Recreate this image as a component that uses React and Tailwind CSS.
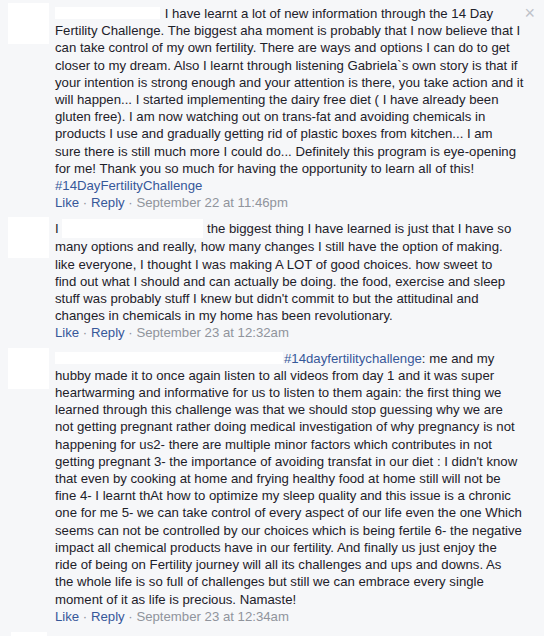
import React from 'react'

const comments = [
  {
    id: 1,
    lead: <span className="inline-block w-[105px] h-[12px] bg-white align-[-1px] mr-[1px]"></span>,
    lines: [
      ' I have learnt a lot of new information through the 14 Day',
      'Fertility Challenge. The biggest aha moment is probably that I now believe that I',
      'can take control of my own fertility. There are ways and options I can do to get',
      'closer to my dream. Also I learnt through listening Gabriela`s own story is that if',
      'your intention is strong enough and your attention is there, you take action and it',
      'will happen... I started implementing the dairy free diet ( I have already been',
      'gluten free). I am now watching out on trans-fat and avoiding chemicals in',
      'products I use and gradually getting rid of plastic boxes from kitchen... I am',
      'sure there is still much more I could do... Definitely this program is eye-opening',
      'for me! Thank you so much for having the opportunity to learn all of this!',
    ],
    tag: '#14DayFertilityChallenge',
    date: 'September 22 at 11:46pm',
  },
  {
    id: 2,
    lead: (
      <>
        I <span className="inline-block w-[141px] h-[19px] bg-white align-[-5px]"></span>
      </>
    ),
    lines: [
      ' the biggest thing I have learned is just that I have so',
      'many options and really, how many changes I still have the option of making.',
      'like everyone, I thought I was making A LOT of good choices. how sweet to',
      'find out what I should and can actually be doing. the food, exercise and sleep',
      "stuff was probably stuff I knew but didn't commit to but the attitudinal and",
      'changes in chemicals in my home has been revolutionary.',
    ],
    date: 'September 23 at 12:32am',
  },
  {
    id: 3,
    lead: (
      <>
        <span className="inline-block w-[228px] h-[12px] bg-white align-[-1px] mr-[1px]"></span>
        <span className="text-[#365899]">#14dayfertilitychallenge</span>
      </>
    ),
    lines: [
      ': me and my',
      'hubby made it to once again listen to all videos from day 1 and it was super',
      'heartwarming and informative for us to listen to them again: the first thing we',
      'learned through this challenge was that we should stop guessing why we are',
      'not getting pregnant rather doing medical investigation of why pregnancy is not',
      'happening for us2- there are multiple minor factors which contributes in not',
      "getting pregnant 3- the importance of avoiding transfat in our diet : I didn't know",
      'that even by cooking at home and frying healthy food at home still will not be',
      'fine 4- I learnt thAt how to optimize my sleep quality and this issue is a chronic',
      'one for me 5- we can take control of every aspect of our life even the one Which',
      'seems can not be controlled by our choices which is being fertile 6- the negative',
      'impact all chemical products have in our fertility. And finally us just enjoy the',
      'ride of being on Fertility journey will all its challenges and ups and downs. As',
      'the whole life is so full of challenges but still we can embrace every single',
      'moment of it as life is precious. Namaste!',
    ],
    date: 'September 23 at 12:34am',
  },
]

function Comment({ comment }) {
  return (
    <div className="flex items-start">
      <div className="w-[41px] h-[41px] bg-white shrink-0 ml-2 mt-[-2px]"></div>
      <div className="ml-[6px] w-[475px]">
        <p className="text-[#1d2129] whitespace-pre">
          {comment.lead}
          {comment.lines.map((line, i) => (
            <React.Fragment key={i}>
              {i > 0 && <br />}
              {line}
            </React.Fragment>
          ))}
          {comment.tag && (
            <>
              <br />
              <span className="text-[#365899]">{comment.tag}</span>
            </>
          )}
        </p>
        <div>
          <span className="text-[#365899]">Like</span>
          <span className="text-[#90949c]"> · </span>
          <span className="text-[#365899]">Reply</span>
          <span className="text-[#90949c]"> · {comment.date}</span>
        </div>
      </div>
    </div>
  )
}

export default function App() {
  return (
    <div className="relative w-[544px] h-[636px] overflow-hidden bg-[#f6f7f9] font-['Liberation_Sans',Arial,sans-serif] text-[13.2px] leading-[17.2px]">
      <button className="absolute top-[4px] right-[9px] text-[#bec2c9] text-[18px] leading-none">×</button>
      <div className="flex flex-col gap-[8px] pt-[5px]">
        {comments.map((c) => (
          <Comment key={c.id} comment={c} />
        ))}
        <div className="w-[36px] h-[10px] bg-white ml-[11px] mt-[-1px]"></div>
      </div>
    </div>
  )
}
